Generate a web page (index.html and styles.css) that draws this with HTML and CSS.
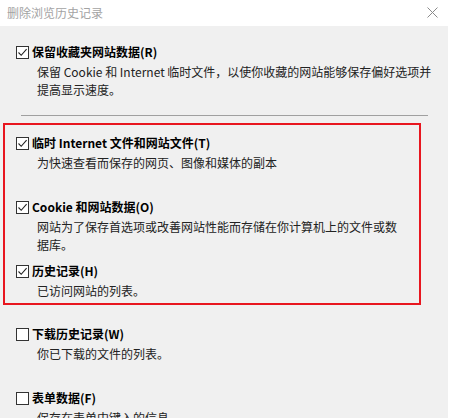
FILE: index.html
```html
<!DOCTYPE html>
<html lang="zh-CN">
<head>
<meta charset="utf-8">
<title>删除浏览历史记录</title>
<link rel="stylesheet" href="styles.css">
</head>
<body>
<div class="titlebar">
  <span class="title">删除浏览历史记录</span>
  <span class="close"><svg width="11" height="11" viewBox="0 0 11 11"><path d="M0.5 0.5 L10.5 10.5 M10.5 0.5 L0.5 10.5" stroke="#8a8a8a" stroke-width="1" fill="none"/></svg></span>
</div>
<div class="panel">
  <div class="item first">
    <div class="label"><span class="cb checked"><svg width="11" height="11" viewBox="0 0 11 11"><path d="M1.5 5.5 L4.2 8.3 L9.6 2.2" stroke="#222" stroke-width="1.1" fill="none"/></svg></span><span>保留收藏夹网站数据(R)</span></div>
    <div class="desc">保留 Cookie 和 Internet 临时文件，以使你收藏的网站能够保存偏好选项并提高显示速度。</div>
  </div>
  <div class="sep"></div>
  <div class="group">
    <div class="item">
      <div class="label"><span class="cb checked"><svg width="11" height="11" viewBox="0 0 11 11"><path d="M1.5 5.5 L4.2 8.3 L9.6 2.2" stroke="#222" stroke-width="1.1" fill="none"/></svg></span><span>临时 Internet 文件和网站文件(T)</span></div>
      <div class="desc">为快速查看而保存的网页、图像和媒体的副本</div>
    </div>
    <div class="item">
      <div class="label"><span class="cb checked"><svg width="11" height="11" viewBox="0 0 11 11"><path d="M1.5 5.5 L4.2 8.3 L9.6 2.2" stroke="#222" stroke-width="1.1" fill="none"/></svg></span><span>Cookie 和网站数据(O)</span></div>
      <div class="desc">网站为了保存首选项或改善网站性能而存储在你计算机上的文件或数据库。</div>
    </div>
    <div class="item last">
      <div class="label"><span class="cb checked"><svg width="11" height="11" viewBox="0 0 11 11"><path d="M1.5 5.5 L4.2 8.3 L9.6 2.2" stroke="#222" stroke-width="1.1" fill="none"/></svg></span><span>历史记录(H)</span></div>
      <div class="desc">已访问网站的列表。</div>
    </div>
  </div>
  <div class="item after">
    <div class="label"><span class="cb"></span><span>下载历史记录(W)</span></div>
    <div class="desc">你已下载的文件的列表。</div>
  </div>
  <div class="item">
    <div class="label"><span class="cb"></span><span>表单数据(F)</span></div>
    <div class="desc">保存在表单中键入的信息</div>
  </div>
</div>
</body>
</html>
```

FILE: styles.css
```css
html, body {
  margin: 0;
  padding: 0;
  background: #ffffff;
  overflow: hidden;
}
body {
  width: 463px;
  height: 418px;
  font-family: "Noto Sans CJK SC", "Noto Sans", sans-serif;
  font-size: 12px;
  color: #000;
}
.titlebar {
  height: 26px;
  display: flex;
  align-items: center;
  justify-content: space-between;
  padding: 0 25px 0 7px;
  background: #ffffff;
}
.title {
  color: #a3a3a3;
  font-size: 12px;
  line-height: 18px;
  margin-top: -1px;
}
.close {
  display: flex;
  margin-top: -2px;
}
.panel {
  width: 448px;
  height: 392px;
  box-sizing: border-box;
  background: #f0f0f0;
  padding: 17px 0 0 16px;
  overflow: hidden;
}
.item {
  height: 64px;
}
.item.first {
  height: auto;
}
.item.last {
  height: auto;
  padding-bottom: 3px;
}
.item.after {
  margin-top: 20px;
}
.label {
  display: flex;
  align-items: center;
  gap: 3px;
  height: 18px;
  line-height: 18px;
  font-weight: bold;
  color: #000;
}
.cb {
  width: 11px;
  height: 11px;
  border: 1px solid #333;
  background: #fff;
  display: flex;
  flex: none;
}
.desc {
  margin-top: 2px;
  padding-left: 21px;
  padding-right: 10px;
  line-height: 18px;
  color: #222;
}
.sep {
  margin: 16px 0 0 5px;
  width: 407px;
  height: 1px;
  background: #a0a0a0;
}
.group {
  margin: 7px 0 0 -13px;
  width: 418px;
  box-sizing: border-box;
  border: 2px solid #e8161f;
  padding: 9px 0 0 11px;
}
.group .desc {
  padding-right: 16px;
}
```
